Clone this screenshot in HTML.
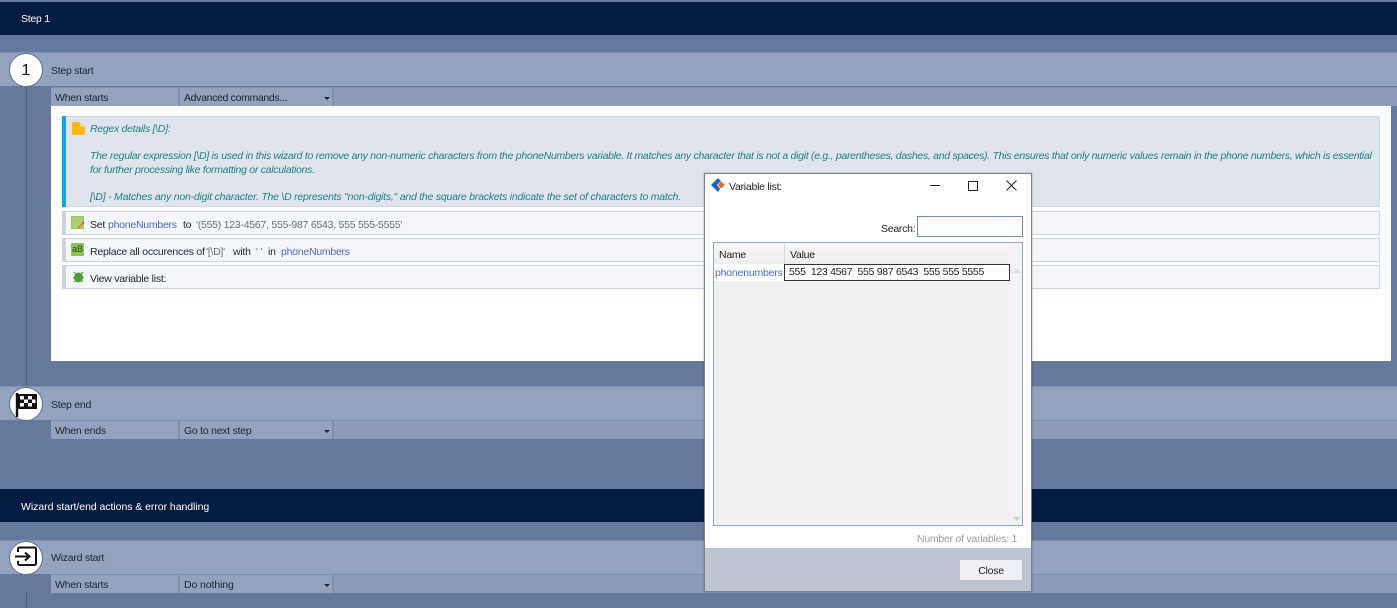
<!DOCTYPE html>
<html>
<head>
<meta charset="utf-8">
<style>
html,body{margin:0;padding:0}
body{width:1397px;height:608px;position:relative;overflow:hidden;background:#64799c;font-family:"Liberation Sans",sans-serif;font-size:10.5px;letter-spacing:-.25px;color:#1c2433}
div,svg{position:absolute}
.t{white-space:nowrap;line-height:14px}
.bar{left:0;width:1397px;background:#031c3f}
.hdr{left:0;width:1397px;height:34px;background:#93a2bf;border-top:1px solid #7d8eae;box-sizing:border-box}
.seam{left:51px;width:1346px;height:19px;background:#7d8eae}
.cell{background:#93a2bf;height:18px}
.circle{width:34px;height:34px;border-radius:50%;background:#fff;border:1px solid #5e7193;box-sizing:border-box}
.row{left:62px;width:1318px;height:24px;background:#f5f6f9;border:1px solid #ccd2de;border-left:4px solid #ccd2de;box-sizing:border-box}
.blue{color:#4a66d8}
.gray{color:#6a7078}
.note{color:#1f8080;font-style:italic;left:90px;font-size:10.5px;letter-spacing:-.285px}
.arrow{width:0;height:0;border-left:3px solid transparent;border-right:3px solid transparent;border-top:3px solid #1c2433}
</style>
</head>
<body>
<div class="bar" style="top:2px;height:33px"></div>
<div class="t" style="left:21px;top:12px;color:#fff">Step 1</div>

<div style="left:26px;top:86px;width:1px;height:300px;background:#4e6082"></div>
<div style="left:26px;top:593px;width:1px;height:15px;background:#4e6082"></div>

<div class="hdr" style="top:52px"></div>
<div class="circle" style="left:9px;top:53px"></div>
<div class="t" style="left:21px;top:63px;font-size:16px;line-height:16px;color:#111;width:10px;text-align:center;letter-spacing:0">1</div>
<div class="t" style="left:51px;top:64px">Step start</div>
<div class="seam" style="top:87px"></div>
<div class="cell" style="left:51px;top:88px;width:127px"></div>
<div class="cell" style="left:180px;top:88px;width:152px"></div>
<div class="cell" style="left:334px;top:88px;width:1063px;background:#8c9bb9"></div>
<div class="t" style="left:55px;top:91px">When starts</div>
<div class="t" style="left:184px;top:91px;letter-spacing:-.33px">Advanced commands...</div>
<div class="arrow" style="left:324px;top:97px"></div>

<div style="left:51px;top:106px;width:1340px;height:255px;background:#fff"></div>

<div style="left:62px;top:116px;width:1318px;height:91px;background:#e0e4ec;border:1px solid #d2d7e1;box-sizing:border-box"></div>
<div style="left:62px;top:116px;width:4px;height:91px;background:#0ea5f2"></div>
<svg style="left:72px;top:122px" width="13" height="13" viewBox="0 0 13 13"><path d="M1 0H8L13 5V12a1 1 0 0 1-1 1H1a1 1 0 0 1-1-1V1a1 1 0 0 1 1-1Z" fill="#fdb813"/><path d="M8 0L13 5H8Z" fill="#fed76a"/></svg>
<div class="t note" style="top:122px">Regex details [\D]:</div>
<div class="t note" style="top:149px">The regular expression [\D] is used in this wizard to remove any non-numeric characters from the phoneNumbers variable. It matches any character that is not a digit (e.g., parentheses, dashes, and spaces). This ensures that only numeric values remain in the phone numbers, which is essential</div>
<div class="t note" style="top:163px">for further processing like formatting or calculations.</div>
<div class="t note" style="top:190px;letter-spacing:-.23px">[\D] - Matches any non-digit character. The \D represents "non-digits," and the square brackets indicate the set of characters to match.</div>

<div class="row" style="top:211px"></div>
<svg style="left:71px;top:216px" width="14" height="14" viewBox="0 0 14 14"><rect x=".5" y=".5" width="12" height="12" fill="#a9cf72" stroke="#9cc464"/><path d="M7 12.500L11 8" stroke="#e8892c" stroke-width="2"/><path d="M11 8L13 6" stroke="#e0557a" stroke-width="2"/></svg>
<div class="t" style="left:90px;top:218px">Set</div>
<div class="t blue" style="left:108px;top:218px">phoneNumbers</div>
<div class="t" style="left:183px;top:218px">to</div>
<div class="t gray" style="left:196px;top:218px">'(555) 123-4567, 555-987 6543, 555 555-5555'</div>

<div class="row" style="top:238px"></div>
<svg style="left:71px;top:243px" width="13" height="13" viewBox="0 0 13 13"><rect width="13" height="13" rx="1" fill="#8fc05a"/></svg>
<div class="t" style="left:72px;top:243px;font-size:9px;line-height:13px;color:#1d4a1d;letter-spacing:0">aB</div>
<div class="t" style="left:90px;top:245px;letter-spacing:-.22px">Replace all occurences of</div>
<div class="t gray" style="left:206px;top:245px">'[\D]'</div>
<div class="t" style="left:233px;top:245px">with</div>
<div class="t gray" style="left:256px;top:245px">' '</div>
<div class="t" style="left:268px;top:245px">in</div>
<div class="t blue" style="left:281px;top:245px">phoneNumbers</div>

<div class="row" style="top:265px"></div>
<svg style="left:72px;top:271px" width="13" height="12" viewBox="0 0 13 12"><ellipse cx="6.500" cy="6.500" rx="4.500" ry="5" fill="#4f9e3a"/><path d="M2 1L4 3M11 1L9 3M1 6.500H3M12 6.500H10M2 11L4 9M11 11L9 9" stroke="#4f9e3a" stroke-width="1"/></svg>
<div class="t" style="left:90px;top:272px">View variable list:</div>

<div class="hdr" style="top:386px"></div>
<div class="circle" style="left:9px;top:387px"></div>
<svg style="left:15px;top:392px" width="24" height="26" viewBox="0 0 24 26"><path d="M2 1V25" stroke="#111" stroke-width="2.400"/><path d="M2 2H22V17H2Z" fill="#111"/><g fill="#fff"><rect x="5" y="4" width="4" height="3.500"/><rect x="13" y="4" width="4" height="3.500"/><rect x="9" y="7.500" width="4" height="3.500"/><rect x="17" y="7.500" width="3.500" height="3.500"/><rect x="5" y="11" width="4" height="3.500"/><rect x="13" y="11" width="4" height="3.500"/></g></svg>
<div class="t" style="left:51px;top:398px">Step end</div>
<div class="seam" style="top:420px"></div>
<div class="cell" style="left:51px;top:421px;width:127px"></div>
<div class="cell" style="left:180px;top:421px;width:152px"></div>
<div class="cell" style="left:334px;top:421px;width:1063px;background:#8c9bb9"></div>
<div class="t" style="left:55px;top:424px">When ends</div>
<div class="t" style="left:184px;top:424px">Go to next step</div>
<div class="arrow" style="left:324px;top:430px"></div>

<div class="bar" style="top:489px;height:33px"></div>
<div class="t" style="left:21px;top:500px;color:#fff;letter-spacing:-.05px">Wizard start/end actions &amp; error handling</div>

<div class="hdr" style="top:540px"></div>
<div class="circle" style="left:9px;top:541px"></div>
<svg style="left:15px;top:546px" width="24" height="22" viewBox="0 0 24 22" fill="none" stroke="#111" stroke-width="2"><path d="M3 6V3A1.500 1.500 0 0 1 4.500 1.500H19.500A1.500 1.500 0 0 1 21 3V17.500A1.500 1.500 0 0 1 19.500 19H4.500A1.500 1.500 0 0 1 3 17.500V15"/><path d="M0 10.500H14M10 6.500L14.500 10.500L10 14.500"/></svg>
<div class="t" style="left:51px;top:551px">Wizard start</div>
<div class="seam" style="top:574px"></div>
<div class="cell" style="left:51px;top:575px;width:127px"></div>
<div class="cell" style="left:180px;top:575px;width:152px"></div>
<div class="cell" style="left:334px;top:575px;width:1063px;background:#8c9bb9"></div>
<div class="t" style="left:55px;top:578px">When starts</div>
<div class="t" style="left:184px;top:578px;letter-spacing:-.1px">Do nothing</div>
<div class="arrow" style="left:324px;top:584px"></div>

<!-- Dialog -->
<div style="left:704px;top:173px;width:328px;height:419px;background:#fff;border:1px solid #7b7f87;box-sizing:border-box;box-shadow:0 0 2px rgba(0,0,0,.3)"></div>
<svg style="left:711px;top:178px" width="14" height="14" viewBox="0 0 14 14"><path d="M7 0L10 3L6 7L9 10.500L7 14L0 7Z" fill="#1466c8"/><path d="M10 3.500L14 7L10 10.500L7 7Z" fill="#f26a1b"/></svg>
<div class="t" style="left:729px;top:180px;color:#222">Variable list:</div>
<div style="left:930px;top:185px;width:10px;height:1px;background:#222"></div>
<div style="left:968px;top:181px;width:10px;height:10px;border:1px solid #222;box-sizing:border-box"></div>
<svg style="left:1006px;top:180px" width="11" height="11" viewBox="0 0 11 11"><path d="M.5 .5L10.500 10.500M10.500 .5L.5 10.500" stroke="#222" stroke-width="1"/></svg>

<div class="t" style="left:881px;top:222px;color:#222">Search:</div>
<div style="left:917px;top:216px;width:106px;height:21px;background:#fff;border:1px solid #6f8db5;box-sizing:border-box"></div>

<div style="left:713px;top:242px;width:310px;height:284px;background:#f0f0f0;border:1px solid #8aa6c8;box-sizing:border-box"></div>
<div style="left:714px;top:243px;width:295px;height:21px;background:linear-gradient(#f7f7f7,#eee)"></div>
<div style="left:1009px;top:243px;width:13px;height:282px;background:#f2f2f2"></div>
<div style="left:784px;top:244px;width:1px;height:20px;background:#d5d5d5"></div>
<div class="t" style="left:719px;top:248px;color:#222">Name</div>
<div class="t" style="left:790px;top:248px;color:#222">Value</div>
<div style="left:714px;top:264px;width:71px;height:17px;background:#fff"></div>
<div class="t blue" style="left:715px;top:266px;width:69px;overflow:hidden;letter-spacing:-.2px">phonenumbers</div>
<div style="left:784px;top:264px;width:226px;height:17px;background:#fff;border:1px solid #333;box-sizing:border-box"></div>
<div class="t" style="left:789px;top:265px;color:#222;white-space:pre;letter-spacing:-.3px">555  123 4567  555 987 6543  555 555 5555</div>
<div style="left:1013px;top:269px;width:0;height:0;border-left:4px solid transparent;border-right:4px solid transparent;border-bottom:4px solid #dcdcdc"></div>
<div style="left:1013px;top:517px;width:0;height:0;border-left:4px solid transparent;border-right:4px solid transparent;border-top:4px solid #d0d0d0"></div>

<div class="t" style="left:917px;top:532px;color:#9a9a9a">Number of variables: 1</div>

<div style="left:705px;top:548px;width:326px;height:43px;background:#bcc3d1"></div>
<div style="left:960px;top:560px;width:62px;height:20px;background:#eef0f5"></div>
<div class="t" style="left:960px;top:564px;width:62px;text-align:center;color:#222">Close</div>
</body>
</html>
